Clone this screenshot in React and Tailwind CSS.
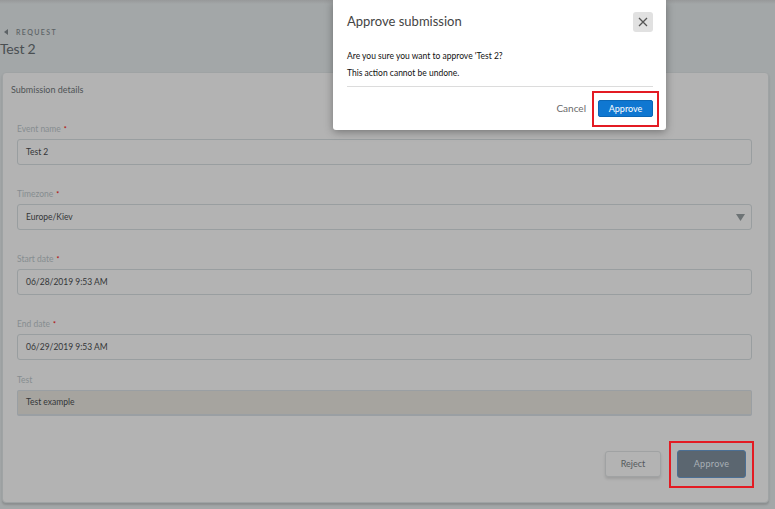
export default function App() {
    const fields = [
        { label: "Event name", required: true, value: "Test 2" },
        { label: "Timezone", required: true, value: "Europe/Kiev", select: true },
        { label: "Start date", required: true, value: "06/28/2019 9:53 AM" },
        { label: "End date", required: true, value: "06/29/2019 9:53 AM" },
    ];

    return (
        <div className="relative w-[775px] h-[509px] overflow-hidden bg-[#a3a7a8] font-['Lato','Liberation_Sans',sans-serif]">
            {/* top bar shadow */}
            <div className="h-[4px] bg-gradient-to-b from-[#97999a] to-[#a3a7a8]" />

            {/* Header */}
            <div className="pt-[23px]">
                <div className="flex items-center gap-[8px] pl-[4px] text-[#5d6366]">
                    <svg width="4" height="6" viewBox="0 0 4 6"><path d="M4 0 L0 3 L4 6 Z" fill="#5d6366" /></svg>
                    <span className="text-[7px] tracking-[1.4px] font-semibold leading-[10px]">REQUEST</span>
                </div>
                <h1 className="text-[14px] leading-[18px] text-[#4a4f52] mt-[3px] tracking-[-0.2px]">Test 2</h1>
            </div>

            {/* Card */}
            <div className="ml-[2px] mt-[14px] w-[767px] h-[431px] rounded-[4px] border border-[#9fa3a4] bg-[#b3b3b3] shadow-[0_2px_2px_rgba(0,0,0,0.15)] pl-[14px] pr-[16px] pt-[11px]">
                <div className="text-[9px] leading-[12px] text-[#4f5456] -ml-[6px]">Submission details</div>

                <div className="mt-[27px]">
                    {fields.map((f, i) => (
                        <div key={f.label} className={i === 0 ? "" : "mt-[23px]"}>
                            <div className="text-[8.5px] leading-[12px] text-[#868d90]">
                                {f.label}
                                <span className="text-[#b00000] text-[7px] align-top ml-[3px]">*</span>
                            </div>
                            <div className="mt-[4px] h-[26px] rounded-[3px] border border-[#999ea0] bg-[#b3b3b3] flex items-center justify-between pl-[8px] pr-[6px]">
                                <span className="text-[8.5px] text-[#333638]">{f.value}</span>
                                {f.select && (
                                    <svg width="9" height="7" viewBox="0 0 9 7"><path d="M0 0 H9 L4.5 7 Z" fill="#6d7375" /></svg>
                                )}
                            </div>
                        </div>
                    ))}

                    <div className="mt-[14px]">
                        <div className="text-[8.5px] leading-[12px] text-[#868d90]">Test</div>
                        <div className="mt-[4px] h-[26px] rounded-[2px] border-b-2 border-t border-x border-[#9a9fa3] bg-[#a6a49f] flex items-center pl-[8px]">
                            <span className="text-[8.5px] text-[#333638]">Test example</span>
                        </div>
                    </div>
                </div>

                <div className="flex justify-end items-center gap-[16px] mt-[34px] pr-[6px]">
                    <button className="w-[56px] h-[26px] rounded-[3px] border border-[#a0a2a3] bg-[#b3b3b3] text-[9px] text-[#555a5d] shadow-[0_2px_3px_rgba(0,0,0,0.12)]">
                        Reject
                    </button>
                    <div className="relative flex">
                        <button className="w-[69px] h-[28px] rounded-[3px] border border-[#4b6f94] bg-[#5b6670] text-[9px] text-[#a9b0b6] tracking-[0.3px]">
                            Approve
                        </button>
                        <div className="absolute -left-[8px] -top-[9px] w-[85px] h-[47px] border-[2px] border-[#e31b23]" />
                    </div>
                </div>
            </div>

            {/* Modal */}
            <div className="absolute left-[333px] top-0 w-[333px] h-[130px] bg-white rounded-b-[3px] shadow-[0_2px_8px_rgba(0,0,0,0.35)] px-[14px] pr-[13px]">
                <div className="flex items-center justify-between h-[43px]">
                    <span className="text-[13px] text-[#444]">Approve submission</span>
                    <button className="w-[20px] h-[20px] rounded-[3px] bg-[#e1e1e1] flex items-center justify-center">
                        <svg width="10" height="10" viewBox="0 0 10 10"><path d="M1 1 L9 9 M9 1 L1 9" stroke="#555" strokeWidth="1.3" /></svg>
                    </button>
                </div>
                <div className="text-[8.5px] leading-[17px] text-[#111] pt-[5px]">
                    <div>Are you sure you want to approve 'Test 2?</div>
                    <div>This action cannot be undone.</div>
                </div>
                <div className="mt-[4px] h-px bg-[#dcdcdc]" />
                <div className="flex justify-end items-center gap-[12px] mt-[13px] h-[17px]">
                    <span className="text-[10px] leading-[17px] text-[#6a6a6a]">Cancel</span>
                    <div className="relative flex">
                        <button className="w-[55px] h-[17px] rounded-[2px] bg-[#0f77d1] border border-[#0b66b5] text-[9px] text-white">
                            Approve
                        </button>
                        <div className="absolute -left-[6px] -top-[9px] w-[67px] h-[36px] border-[2px] border-[#e31b23]" />
                    </div>
                </div>
            </div>
        </div>
    );
}
